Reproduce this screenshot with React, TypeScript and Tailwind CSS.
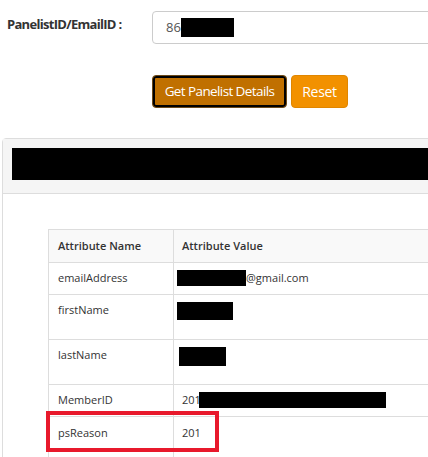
export default function App() {
  return (
    <div className="w-[428px] h-[457px] overflow-hidden bg-white font-['Open_Sans',sans-serif] text-[#333]">
      <div className="flex pt-[11px]">
        <label className="w-[152px] shrink-0 pl-[7px] pt-[4px] text-[13px] font-bold tracking-[-0.7px] text-[#333]">
          PanelistID/EmailID :
        </label>
        <div className="flex h-[33px] w-[320px] shrink-0 items-center rounded-[4px] border border-[#ccc] pl-[13px] text-[13px] text-[#555]">
          <span>86</span>
          <span className="inline-block h-[19px] w-[53px] bg-black" />
        </div>
      </div>

      <div className="mt-[31px] flex gap-[4px] pl-[152px]">
        <button className="h-[33px] w-[135px] rounded-[4px] border border-[#6b4a1a] bg-[#c07000] text-[13.5px] tracking-[-0.6px] text-white ring-2 ring-inset ring-black">
          Get Panelist Details
        </button>
        <button className="h-[33px] w-[57px] rounded-[4px] border border-[#e08600] bg-[#f29100] text-[14px] tracking-[-0.3px] text-white">
          Reset
        </button>
      </div>

      <div className="ml-[2px] mt-[30px] w-[500px] rounded-t-[4px] border border-[#ddd]">
        <div className="h-[55px] border-b border-[#ddd] bg-[#f5f5f5] px-[9px] pt-[9px]">
          <div className="h-[32px] w-full bg-black" />
        </div>
        <div className="pl-[45px] pt-[35px]">
          <div className="relative">
            <table className="w-[460px] border-collapse text-[11px] text-[#333]">
              <thead>
                <tr className="h-[33px] bg-[#f9f9f9]">
                  <th className="w-[125px] border border-[#ddd] px-[9px] text-left align-top pt-[8px] font-semibold">Attribute Name</th>
                  <th className="border border-[#ddd] px-[8px] text-left align-top pt-[8px] font-semibold">Attribute Value</th>
                </tr>
              </thead>
              <tbody>
                <tr className="h-[32px]">
                  <td className="border border-[#ddd] px-[9px] pt-[7px] align-top">emailAddress</td>
                  <td className="border border-[#ddd] px-[8px] pt-[7px] align-top">
                    <span className="ml-[-5px] inline-block h-[16px] w-[69px] bg-black align-top" />
                    @gmail.com
                  </td>
                </tr>
                <tr className="h-[45px]">
                  <td className="border border-[#ddd] px-[9px] pt-[7px] align-top">firstName</td>
                  <td className="border border-[#ddd] px-[8px] pt-[7px] align-top">
                    <span className="ml-[-5px] inline-block h-[18px] w-[56px] bg-black align-top" />
                  </td>
                </tr>
                <tr className="h-[45px]">
                  <td className="border border-[#ddd] px-[9px] pt-[7px] align-top">lastName</td>
                  <td className="border border-[#ddd] px-[8px] pt-[7px] align-top">
                    <span className="ml-[-3px] inline-block h-[19px] w-[47px] bg-black align-top" />
                  </td>
                </tr>
                <tr className="h-[32px]">
                  <td className="border border-[#ddd] px-[9px] pt-[7px] align-top">MemberID</td>
                  <td className="border border-[#ddd] px-[8px] pt-[7px] align-top">
                    201
                    <span className="ml-[-2px] inline-block h-[16px] w-[187px] bg-black align-top" />
                  </td>
                </tr>
                <tr className="h-[45px]">
                  <td className="border border-[#ddd] px-[9px] pt-[8px] align-top">psReason</td>
                  <td className="border border-[#ddd] px-[8px] pt-[8px] align-top">201</td>
                </tr>
              </tbody>
            </table>
            <div className="absolute left-[-2px] top-[182px] h-[41px] w-[173px] border-[4px] border-[#e8192c]" />
          </div>
        </div>
      </div>
    </div>
  );
}
